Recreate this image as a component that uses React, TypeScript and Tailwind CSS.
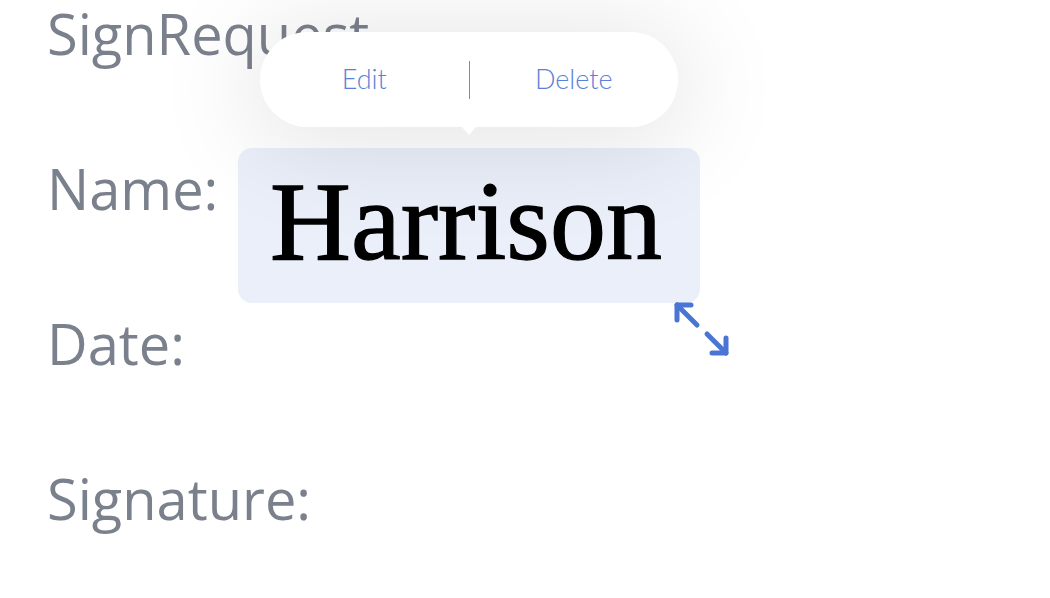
export default function App() {
  return (
    <div className="relative w-[1050px] h-[598px] overflow-hidden bg-white">
      <div className="flex flex-col pl-[47px] -mt-[44px] text-[56px] leading-[155px] text-[#7b808d] font-['Open_Sans',sans-serif]">
        <div>SignRequest</div>
        <div>Name:</div>
        <div>Date:</div>
        <div>Signature:</div>
      </div>

      <div className="absolute left-[238px] top-[148px] w-[462px] h-[155px] rounded-[14px] bg-[#eaeff9] flex items-center justify-center">
        <span className="text-[112px] leading-none text-black font-['Liberation_Serif',serif] -mt-[10px] -ml-[6px] [-webkit-text-stroke:1.3px_#000]">Harrison</span>
      </div>

      <div className="absolute left-[260px] top-[32px] w-[418px] h-[95px] rounded-full bg-white shadow-[0_8px_100px_14px_rgba(0,0,0,0.10)] flex items-center font-['Lato',sans-serif] font-light text-[27px] text-[#5a80d8]">
        <div className="flex-1 text-center">Edit</div>
        <div className="w-px h-[38px] bg-[#8a8a8a]" />
        <div className="flex-1 text-center">Delete</div>
        <div className="absolute left-[201px] -bottom-[8px] w-0 h-0 border-l-[8px] border-r-[8px] border-t-[9px] border-l-transparent border-r-transparent border-t-white" />
      </div>

      <svg className="absolute left-[672px] top-[300px]" width="60" height="60" viewBox="0 0 60 60" fill="none" stroke="#4a75d5" strokeWidth="5" strokeLinecap="round" strokeLinejoin="round">
        <path d="M5 20 V5 H19" />
        <path d="M5 5 L25 25" />
        <path d="M54 38 V53 H40" />
        <path d="M54 53 L35 34" />
      </svg>
    </div>
  );
}
